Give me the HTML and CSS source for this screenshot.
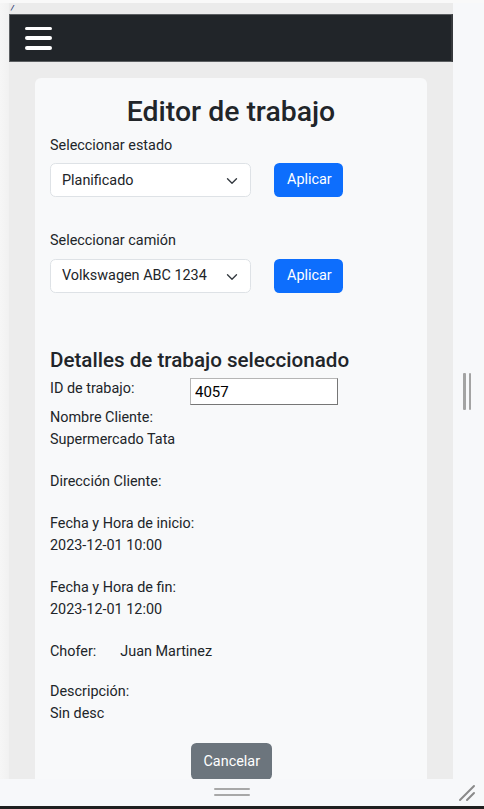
FILE: index.html
```html
<!DOCTYPE html>
<html lang="es">
<head>
<meta charset="utf-8">
<title>Editor de trabajo</title>
<link rel="stylesheet" href="styles.css">
</head>
<body>
<div class="screen">
  <div class="gutter-left"></div>
  <div class="top-strip"></div>
  <div class="device">
    <div class="device-top"><span class="slash">/</span></div>
    <nav class="navbar">
      <button class="burger" aria-label="Menú"><i></i><i></i><i></i></button>
    </nav>
    <main class="content">
      <section class="card">
        <h1 class="title">Editor de trabajo</h1>

        <div class="group">
          <label class="form-label">Seleccionar estado</label>
          <div class="row">
            <div class="select-wrap">
              <select class="form-select"><option>Planificado</option></select>
              <svg class="chev" viewBox="0 0 16 16" width="12" height="12"><path d="M2 5l6 6 6-6" fill="none" stroke="#343a40" stroke-width="1.8" stroke-linecap="round" stroke-linejoin="round"/></svg>
            </div>
            <button class="btn btn-primary">Aplicar</button>
          </div>
        </div>

        <div class="group">
          <label class="form-label">Seleccionar camión</label>
          <div class="row">
            <div class="select-wrap">
              <select class="form-select"><option>Volkswagen ABC 1234</option></select>
              <svg class="chev" viewBox="0 0 16 16" width="12" height="12"><path d="M2 5l6 6 6-6" fill="none" stroke="#343a40" stroke-width="1.8" stroke-linecap="round" stroke-linejoin="round"/></svg>
            </div>
            <button class="btn btn-primary">Aplicar</button>
          </div>
        </div>

        <h4 class="subtitle">Detalles de trabajo seleccionado</h4>
        <div class="id-row">
          <span class="id-label">ID de trabajo:</span>
          <input class="id-input" type="text" value="4057">
        </div>
        <div class="field"><div>Nombre Cliente:</div><div>Supermercado Tata</div></div>
        <div class="field"><div>Dirección Cliente:</div><div></div></div>
        <div class="field"><div>Fecha y Hora de inicio:</div><div>2023-12-01 10:00</div></div>
        <div class="field"><div>Fecha y Hora de fin:</div><div>2023-12-01 12:00</div></div>
        <div class="field tight"><div><span>Chofer:</span><span class="driver">Juan Martinez</span></div></div>
        <div class="field tight"><div>Descripción:</div><div>Sin desc</div></div>
        <div class="actions"><button class="btn btn-secondary">Cancelar</button></div>
      </section>
    </main>
  </div>
  <div class="gutter-right"><span class="vhandle"><i></i><i></i></span></div>
  <div class="bottom-strip">
    <span class="hhandle"><i></i><i></i></span>
    <svg class="resize" viewBox="0 0 18 18" width="18" height="18"><path d="M2 16L16 2M9 16L16 9" stroke="#8a8a8a" stroke-width="2" stroke-linecap="round"/></svg>
  </div>
  <div class="black-bar"></div>
</div>
</body>
</html>
```
FILE: styles.css
```css
* { box-sizing: border-box; }
html, body { margin: 0; padding: 0; }
body {
  background: #f7f8fa;
  font-family: Roboto, "Liberation Sans", sans-serif;
  color: #212529;
  width: 484px;
  height: 809px;
  overflow: hidden;
}
.screen {
  display: grid;
  grid-template-columns: 9px 444px 31px;
  grid-template-rows: 3px 776px 27px 3px;
  height: 809px;
}
.top-strip { grid-column: 1 / 4; grid-row: 1; background: #f9f9f9; }
.gutter-left {
  grid-column: 1; grid-row: 2;
  background: linear-gradient(90deg, #f6f6f6, #f1f1f1);
}
.device {
  grid-column: 2; grid-row: 2;
  background: #ececec;
  overflow: hidden;
  display: flex;
  flex-direction: column;
}
.device-top {
  height: 11px;
  background: #ebebeb;
  padding-left: 2px;
  line-height: 8px;
}
.slash {
  font-size: 8px;
  font-style: italic;
  font-weight: 700;
  color: #2a3570;
  display: inline-block;
  vertical-align: top;
  margin-top: 1px;
}
.navbar {
  height: 48px;
  background: #212529;
  border: 1px solid #5b5e61;
  border-right: 2px solid #36393c;
  display: flex;
  align-items: center;
  padding-left: 15px;
  flex-shrink: 0;
}
.burger {
  background: none;
  border: 0;
  padding: 0;
  width: 27px;
  height: 23px;
  display: flex;
  flex-direction: column;
  justify-content: space-between;
}
.burger i {
  display: block;
  height: 3.5px;
  border-radius: 2px;
  background: #fff;
}
.content {
  flex: 1;
  padding: 16px 26px 0;
  overflow: hidden;
}
.card {
  background: #f8f9fa;
  border-radius: 6px;
  padding: 17px 15px 0;
  font-size: 14.4px;
  line-height: 21.6px;
  min-height: 720px;
}
.title {
  margin: 0 0 5px;
  text-align: center;
  font-size: 28.4px;
  line-height: 34.6px;
  font-weight: 500;
}
.form-label {
  display: block;
  margin-bottom: 7px;
}
.group + .group { margin-top: 33px; }
.row {
  display: flex;
  gap: 23px;
  align-items: center;
}
.select-wrap {
  position: relative;
  width: 201px;
}
.form-select {
  appearance: none;
  -webkit-appearance: none;
  width: 100%;
  height: 34px;
  border: 1px solid #dee2e6;
  border-radius: 5.4px;
  background: #fff;
  padding: 1px 36px 0 11px;
  font: inherit;
  color: #212529;
}
.chev {
  position: absolute;
  right: 13px;
  top: 12px;
  pointer-events: none;
}
.btn {
  height: 34px;
  border: 1px solid transparent;
  border-radius: 5.4px;
  padding: 0 12px;
  font: inherit;
  color: #fff;
}
.btn-primary { background: #0d6efd; width: 69px; }
.btn-secondary { background: #6c757d; width: 81px; height: 37px; padding-top: 1px; }
.subtitle {
  margin: 54px 0 5px;
  font-size: 20.6px;
  line-height: 26px;
  font-weight: 500;
}
.id-row {
  display: flex;
  align-items: flex-start;
  height: 29px;
}
.id-label { width: 140px; line-height: 22px; }
.id-input {
  width: 148px;
  height: 27px;
  border: 1px solid #767676;
  border-top-color: #b5b5b5;
  border-left-color: #b5b5b5;
  border-radius: 0;
  background: #fff;
  padding: 2px 4px 0;
  font-family: Roboto, "Liberation Sans", sans-serif;
  font-size: 15px;
  color: #000;
}
.field { line-height: 22px; margin-bottom: 20px; }
.field.tight { margin-bottom: 18px; }
.driver { margin-left: 24px; }
.actions { display: flex; justify-content: center; margin-top: 0; }
.gutter-right {
  grid-column: 3; grid-row: 2 / 4;
  position: relative;
  background: #f7f8fa;
}
.vhandle {
  position: absolute;
  left: 10px;
  top: 370px;
  display: flex;
  gap: 3px;
}
.vhandle i {
  display: block;
  width: 2.5px;
  height: 37px;
  background: #a3a3a3;
  border-radius: 1px;
}
.bottom-strip {
  grid-column: 1 / 3; grid-row: 3;
  background: #f7f8fa;
  position: relative;
}
.hhandle {
  position: absolute;
  left: 214px;
  top: 9px;
  width: 36px;
  display: flex;
  flex-direction: column;
  gap: 4px;
}
.hhandle i {
  display: block;
  height: 2px;
  background: #a8a8a8;
  border-radius: 1px;
}
.resize {
  position: absolute;
  left: 458px;
  top: 5px;
}
.black-bar {
  grid-column: 1 / 4; grid-row: 4;
  background: #1f1f1f;
}
```
